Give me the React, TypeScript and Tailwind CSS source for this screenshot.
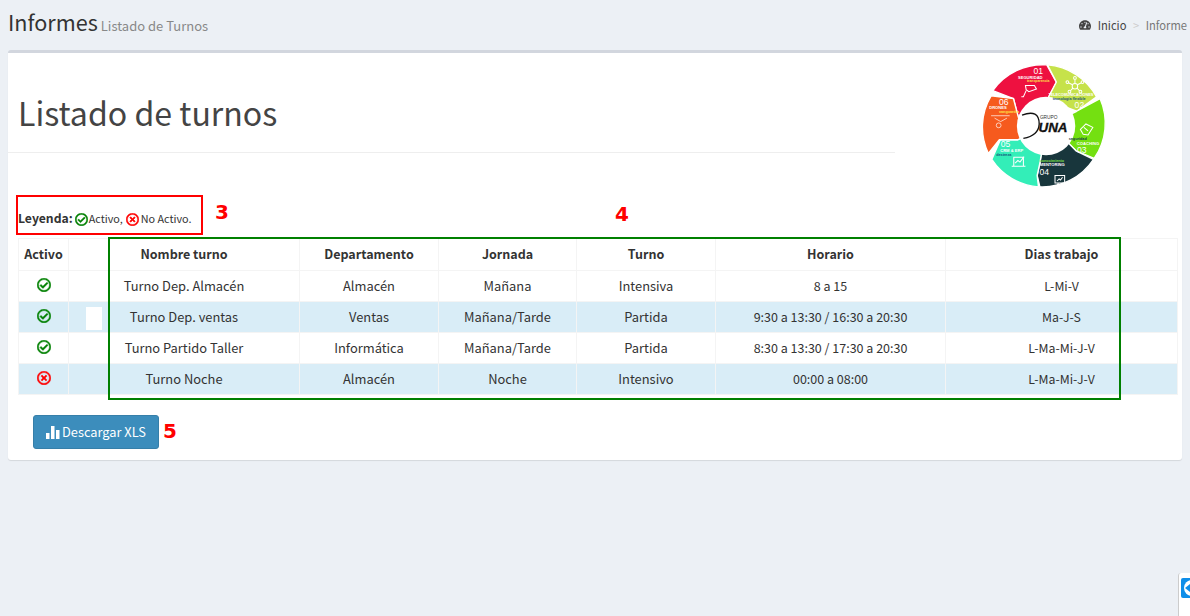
import React from "react";
import { FaRegCheckCircle, FaRegTimesCircle, FaTachometerAlt } from "react-icons/fa";

const FONT = "font-['Noto_Sans_CJK_SC','Noto_Sans',sans-serif]";
const MARK = "absolute font-['DejaVu_Sans',sans-serif] font-bold text-[20px] leading-[24px] text-[#ff0000]";

const rows = [
  { on: true, name: "Turno Dep. Almacén", dep: "Almacén", jor: "Mañana", tur: "Intensiva", hor: "8 a 15", dias: "L-Mi-V" },
  { on: true, name: "Turno Dep. ventas", dep: "Ventas", jor: "Mañana/Tarde", tur: "Partida", hor: "9:30 a 13:30 / 16:30 a 20:30", dias: "Ma-J-S" },
  { on: true, name: "Turno Partido Taller", dep: "Informática", jor: "Mañana/Tarde", tur: "Partida", hor: "8:30 a 13:30 / 17:30 a 20:30", dias: "L-Ma-Mi-J-V" },
  { on: false, name: "Turno Noche", dep: "Almacén", jor: "Noche", tur: "Intensivo", hor: "00:00 a 08:00", dias: "L-Ma-Mi-J-V" },
];

function Logo() {
  return (
    <svg viewBox="60 30 381 390" className="w-[131px] h-[134px] block ml-[83px] mt-[5px] shrink-0">
      <g stroke="#fff" strokeWidth="4" strokeLinejoin="round">
        <path d="M103 125 A178 178 0 0 1 260 50 L288 100 L262 150 L258 228 L178 205 L163 148 Z" fill="#ee1140" />
        <path d="M262 50 A178 178 0 0 1 405 143 L347 185 L268 155 L258 228 L262 150 L288 100 Z" fill="#c6e24a" />
        <path d="M415 148 A178 178 0 0 1 398 322 L345 300 L318 272 L258 228 L347 185 Z" fill="#74e011" />
        <path d="M396 325 A178 178 0 0 1 240 405 L232 372 L240 335 L258 228 L318 272 L345 300 Z" fill="#18363c" />
        <path d="M236 405 A178 178 0 0 1 100 325 L125 268 L175 268 L258 228 L240 335 L232 372 Z" fill="#33eeb8" />
        <path d="M90 308 A178 178 0 0 1 98 140 L163 148 L178 205 L258 228 L175 268 L122 268 Z" fill="#f65a1e" />
      </g>
      <circle cx="258" cy="228" r="85" fill="#fff" />
      <path d="M188 196 Q238 178 238 222 Q236 256 192 264" fill="none" stroke="#111" strokeWidth="4" />
      <text x="240" y="208" fontSize="14" fill="#333" fontFamily="Liberation Sans">GRUPO</text>
      <text x="236" y="245" fontSize="39" fontWeight="700" fontStyle="italic" fill="#111" stroke="#111" strokeWidth="1" fontFamily="Liberation Sans">UNA</text>
      <g fontFamily="Liberation Sans" fontWeight="700" fill="#fff" fontSize="12" textAnchor="middle">
        <text x="235" y="78" fontSize="25" fontWeight="400">01</text>
        <text x="212" y="91">SEGURIDAD</text>
        <text x="235" y="101" fill="#ffe14a" fontSize="10">transparencia</text>
        <text x="330" y="142" fontSize="11">TELECOMUNICACIONES</text>
        <text x="325" y="153" fill="#15507a" fontSize="11">tecnología flexible</text>
        <text x="355" y="176" fontSize="25" fontWeight="400">02</text>
        <text x="350" y="270" fill="#17364a" fontSize="11">seguridad</text>
        <text x="380" y="284">COACHING</text>
        <text x="362" y="306" fontSize="25" fontWeight="400">03</text>
        <text x="275" y="333" fill="#7ee04a" fontSize="11">conocimiento</text>
        <text x="276" y="345">MENTORING</text>
        <text x="253" y="370" fontSize="25" fontWeight="400">04</text>
        <text x="140" y="290" fontSize="25" fontWeight="400">05</text>
        <text x="158" y="304">CRM &amp; ERP</text>
        <text x="135" y="316" fill="#15507a" fontSize="11">destreza</text>
        <text x="135" y="166" fontSize="25" fontWeight="400">06</text>
        <text x="118" y="178">DRONES</text>
        <text x="150" y="190" fill="#ffe14a" fontSize="11">vanguardia</text>
      </g>
      <g fill="none" stroke="#fff" strokeWidth="3">
        <path d="M198 110 h26 l6 10 l-22 8 l-8 -6 z M200 125 l-8 18 h-6" />
        <path d="M158 345 h40 M164 345 v-26 h28 v26 M168 336 l8 -8 l6 5 l12 -16" />
        <path d="M98 198 h54 M108 205 l18 10 l18 -10" strokeWidth="2" />
        <circle cx="120" cy="226" r="7" strokeWidth="2" />
        <path d="M358 238 l16 -16 l20 10 l-14 22 l-14 -2 z M368 232 l12 10" />
        <path d="M284 372 h28 v22 h-28 z M294 394 l-6 12 M304 394 l6 12 M290 388 l6 -6 l4 3 l6 -8" />
        <circle cx="342" cy="112" r="8" />
        <circle cx="342" cy="88" r="4" />
        <circle cx="364" cy="100" r="4" />
        <circle cx="320" cy="100" r="4" />
        <circle cx="358" cy="128" r="4" />
        <circle cx="326" cy="128" r="4" />
        <path d="M342 104 v-12 M349 108 l12 -6 M335 108 l-12 -6 M348 118 l7 7 M336 118 l-7 7" />
      </g>
    </svg>
  );
}

function On() {
  return <FaRegCheckCircle className="inline-block w-[14px] h-[14px] text-[#008000] stroke-[20] -translate-y-[3px]" />;
}
function Off() {
  return <FaRegTimesCircle className="inline-block w-[14px] h-[14px] text-[#ff0000] stroke-[20] -translate-y-[3px]" />;
}

const th = "border border-[#f4f4f4] font-bold text-center align-middle p-0 pb-[2px] text-[12.5px]";
const td = "border border-[#f4f4f4] text-center align-middle p-0 text-[12.9px]";
const tdHor = "border border-[#f4f4f4] text-center align-middle p-0 text-[12.5px]";
const tdDias = "border border-[#f4f4f4] text-center align-middle p-0 text-[12.3px]";

export default function App() {
  return (
    <div className={`${FONT} relative w-[1190px] h-[616px] overflow-hidden bg-[#ecf0f5] text-[#333] text-[13px] leading-[20px]`}>
      <div className="relative flex items-baseline justify-between pl-2 pr-[3px] h-[50px] pt-[5px]">
        <div className="flex items-baseline">
          <span className="text-[21.6px] leading-[34px] text-[#333]">Informes</span>
          <span className="ml-[3px] text-[13px] text-[#888]">Listado de Turnos</span>
        </div>
        <div className="flex items-center text-[11.2px] mt-[-3px]">
          <FaTachometerAlt className="w-3 h-3 text-[#444] mr-[7px]" />
          <span className="text-[#444]">Inicio</span>
          <span className="text-[#ccc] mx-[6.5px]">&gt;</span>
          <span className="text-[#777]">Informe</span>
        </div>
      </div>

      <div className="relative mx-2 h-[410px] bg-white border-t-[3px] border-[#d2d6de] rounded-[3px] shadow-[0_1px_1px_rgba(0,0,0,0.1)]">
        <div className="flex h-[142px]">
          <div className="w-[887px] h-[100px] border-b border-[#eeeeee] pl-[10px] shrink-0 flex items-end pb-[20px]">
            <h1 className="text-[32.1px] leading-[40px] text-[#444]">Listado de turnos</h1>
          </div>
          <Logo />
        </div>

        <div className="ml-2 w-[187px] h-[40px] border-2 border-[#ff0000] pt-[11px] flex items-baseline text-[10.8px] leading-[20px] whitespace-nowrap">
          <b className="text-[12.2px]">Leyenda:</b>
          <FaRegCheckCircle className="ml-[2px] mr-[1px] w-[13px] h-[13px] text-[#008000] stroke-[20] self-center -translate-y-[1px]" />
          <span>Activo,</span>
          <FaRegTimesCircle className="ml-[3px] mr-[2px] w-[13px] h-[13px] text-[#ff0000] stroke-[20] self-center -translate-y-[1px]" />
          <span>No Activo.</span>
        </div>

        <table className="ml-[10px] mt-[3px] w-[1159px] table-fixed border-collapse">
          <colgroup>
            <col className="w-[50px]" />
            <col className="w-[231px]" />
            <col className="w-[139px]" />
            <col className="w-[138px]" />
            <col className="w-[139px]" />
            <col className="w-[230px]" />
            <col className="w-[232px]" />
          </colgroup>
          <thead>
            <tr className="h-[32px]">
              <th className={th}>Activo</th>
              <th className={th}>Nombre turno</th>
              <th className={th}>Departamento</th>
              <th className={th}>Jornada</th>
              <th className={th}>Turno</th>
              <th className={th}>Horario</th>
              <th className={th}>Dias trabajo</th>
            </tr>
          </thead>
          <tbody>
            {rows.map((r, i) => (
              <tr key={r.name} className={`h-[31px] ${i % 2 === 1 ? "bg-[#d9edf7]" : "bg-white"}`}>
                <td className={td}>{r.on ? <On /> : <Off />}</td>
                <td className={td}>{r.name}</td>
                <td className={td}>{r.dep}</td>
                <td className={td}>{r.jor}</td>
                <td className={td}>{r.tur}</td>
                <td className={tdHor}>{r.hor}</td>
                <td className={tdDias}>{r.dias}</td>
              </tr>
            ))}
          </tbody>
        </table>

        <button className="ml-[25px] mt-5 w-[126px] h-[34px] flex items-center justify-center gap-[2px] bg-[#3c8dbc] border border-[#367fa9] rounded-[3px] text-white text-[12.8px]">
          <svg viewBox="0 0 14 14" className="w-[14px] h-[14px]" fill="#fff">
            <rect x="0" y="8" width="3.5" height="6" />
            <rect x="5" y="1" width="3.5" height="13" />
            <rect x="10" y="5" width="3.5" height="9" />
          </svg>
          Descargar XLS
        </button>

        {/* annotation overlays */}
        <div className="absolute left-[100px] top-[184px] w-[1013px] h-[163px] border-2 border-[#008000] pointer-events-none" />
        <div className="absolute left-[78px] top-[254px] w-[16px] h-[23px] bg-white" />
        <span className={`${MARK} left-[207px] top-[147px]`}>3</span>
        <span className={`${MARK} left-[607px] top-[149px]`}>4</span>
        <span className={`${MARK} left-[155px] top-[366px]`}>5</span>
      </div>

      {/* floating remote-support tab */}
      <div className="absolute left-[1178px] top-[573px] w-[14px] h-[45px] bg-white rounded-tl-[3px] border-l border-[#cccccc] pl-[2px] pt-[5px]">
        <div className="w-[12px] h-[20px] bg-[#0e8ee9] rounded-[2px] flex items-center">
          <svg viewBox="0 0 12 20" className="w-[12px] h-[20px]">
            <circle cx="11" cy="10" r="8" fill="#fff" />
            <path d="M4 10 l5 -4 v3 h3 v2 h-3 v3 z" fill="#0e8ee9" />
          </svg>
        </div>
      </div>
    </div>
  );
}
